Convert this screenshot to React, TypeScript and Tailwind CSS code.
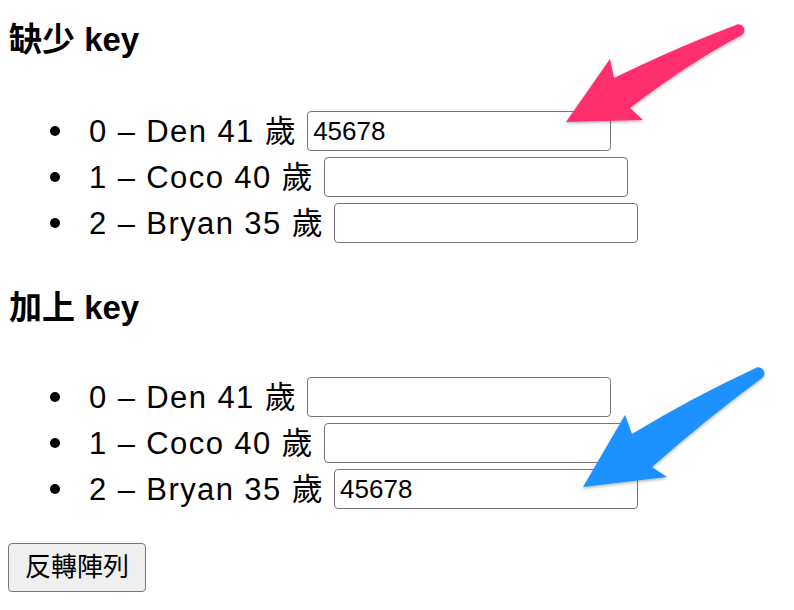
import React from "react";

const people = [
  { id: 0, name: "Den", age: 41 },
  { id: 1, name: "Coco", age: 40 },
  { id: 2, name: "Bryan", age: 35 },
];

function Row({ p, value }: { p: { id: number; name: string; age: number }; value: string }) {
  return (
    <li className="flex h-[46px] items-center">
      <span className="mr-[29px] h-[10px] w-[10px] shrink-0 rounded-full bg-black" />
      <span className="whitespace-pre text-[31px] leading-none tracking-[1.4px] text-black">
        {p.id} – {p.name} {p.age} 歲{" "}
      </span>
      <input
        readOnly
        value={value}
        className="h-[40px] w-[304px] rounded-[4px] border-[1.5px] border-[#767676] bg-white px-[5px] text-[26px] text-black outline-none"
      />
    </li>
  );
}

export default function App() {
  return (
    <div
      className="relative h-[610px] w-[794px] overflow-hidden bg-white"
      style={{ fontFamily: '"Liberation Sans", "Noto Sans CJK TC", sans-serif' }}
    >
      <div className="pl-[9px]">
        <h3 className="mt-[20px] h-[40px] text-[33px] font-bold leading-[40px] text-black">缺少 key</h3>
        <ul className="mt-[48px] pl-[41px]">
          {people.map((p, i) => (
            <Row key={i} p={p} value={i === 0 ? "45678" : ""} />
          ))}
        </ul>
        <h3 className="mt-[42px] h-[40px] text-[33px] font-bold leading-[40px] text-black">加上 key</h3>
        <ul className="mt-[46px] pl-[41px]">
          {people.map((p, i) => (
            <Row key={p.id} p={p} value={i === 2 ? "45678" : ""} />
          ))}
        </ul>
        <button className="mt-[31px] flex h-[49px] w-[138px] -translate-x-[1px] items-center justify-center rounded-[4px] border-[1.5px] border-[#767676] bg-[#efefef] text-[26px] text-black">
          反轉陣列
        </button>
      </div>

      <svg className="pointer-events-none absolute left-0 top-0" width="794" height="610" viewBox="0 0 794 610">
        <defs>
          <filter id="sh" x="-20%" y="-20%" width="140%" height="140%">
            <feDropShadow dx="0" dy="1.5" stdDeviation="1.5" floodColor="#000" floodOpacity="0.3" />
          </filter>
        </defs>
        <path
          filter="url(#sh)"
          fill="#ff2d6c"
          d="M735 25.5 Q680 46 614 78 L610 59 L566 122 L643 120 L630 108 Q690 62 742 35 A4.5 4.5 0 0 0 735 25.5 Z"
        />
        <path
          filter="url(#sh)"
          fill="#1d91ff"
          d="M755 368.5 Q695 396 632 434 L625 415 L583 487 L667 477 L652 467 Q705 420 762 378 A5 5 0 0 0 755 368.5 Z"
        />
      </svg>
    </div>
  );
}
